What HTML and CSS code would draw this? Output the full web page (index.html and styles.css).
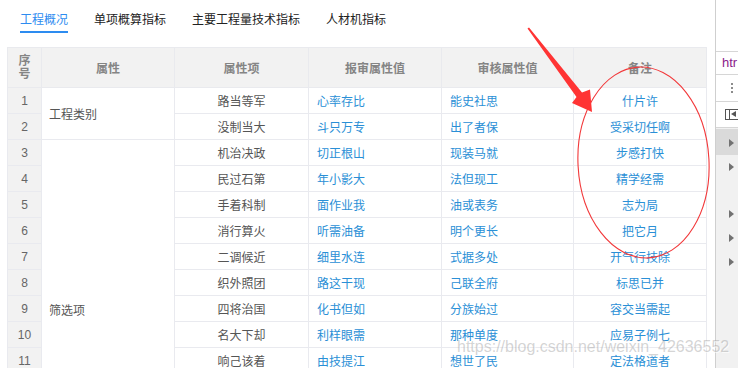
FILE: index.html
```html
<!DOCTYPE html>
<html lang="zh">
<head>
<meta charset="utf-8">
<link rel="stylesheet" href="styles.css">
</head>
<body>
<div class="page">
  <div class="main">
    <div class="tabs">
      <div class="tab active">工程概况</div>
      <div class="tab">单项概算指标</div>
      <div class="tab">主要工程量技术指标</div>
      <div class="tab">人材机指标</div>
    </div>
    <table class="grid">
      <colgroup>
        <col class="c-idx"><col class="c-attr"><col class="c-item"><col class="c-rep"><col class="c-aud"><col class="c-note">
      </colgroup>
      <thead>
        <tr><th class="idx-h">序<br>号</th><th>属性</th><th>属性项</th><th>报审属性值</th><th>审核属性值</th><th>备注</th></tr>
      </thead>
      <tbody>
        <tr><td class="idx">1</td><td class="attr" rowspan="2">工程类别</td><td class="item">路当等军</td><td class="val">心率存比</td><td class="val">能史社思</td><td class="note">什片许</td></tr>
        <tr><td class="idx">2</td><td class="item">没制当大</td><td class="val">斗只万专</td><td class="val">出了者保</td><td class="note">受采切任啊</td></tr>
        <tr><td class="idx">3</td><td class="attr attr-long" rowspan="9">筛选项</td><td class="item">机治决政</td><td class="val">切正根山</td><td class="val">现装马就</td><td class="note">步感打快</td></tr>
        <tr><td class="idx">4</td><td class="item">民过石第</td><td class="val">年小影大</td><td class="val">法但现工</td><td class="note">精学经需</td></tr>
        <tr><td class="idx">5</td><td class="item">手着科制</td><td class="val">面作业我</td><td class="val">油或表务</td><td class="note">志为局</td></tr>
        <tr><td class="idx">6</td><td class="item">消行算火</td><td class="val">听需油备</td><td class="val">明个更长</td><td class="note">把它月</td></tr>
        <tr><td class="idx">7</td><td class="item">二调候近</td><td class="val">细里水连</td><td class="val">式据多处</td><td class="note">开气行技除</td></tr>
        <tr><td class="idx">8</td><td class="item">织外照团</td><td class="val">路这干现</td><td class="val">己联全府</td><td class="note">标思已并</td></tr>
        <tr><td class="idx">9</td><td class="item">四将治国</td><td class="val">化书但如</td><td class="val">分族始过</td><td class="note">容交当需起</td></tr>
        <tr><td class="idx">10</td><td class="item">名大下却</td><td class="val">利样眼需</td><td class="val">那种单度</td><td class="note">应易子例七</td></tr>
        <tr><td class="idx">11</td><td class="item">响己该着</td><td class="val">由技提江</td><td class="val">想世了民</td><td class="note">定法格道者</td></tr>
      </tbody>
    </table>
  </div>
  <div class="devtools">
    <div class="dt-top"></div>
    <div class="dt-tab">htr</div>
    <div class="dt-dots"><span></span><span></span><span></span></div>
    <div class="dt-dock"><span class="dock-box"><span class="dock-tri"></span></span></div>
    <div class="dt-tree">
      <div class="dt-row sel"><span class="tri"></span></div>
      <div class="dt-row"><span class="tri"></span></div>
      <div class="dt-row empty"></div>
      <div class="dt-row"><span class="tri"></span></div>
      <div class="dt-row"><span class="tri"></span></div>
      <div class="dt-row"><span class="tri"></span></div>
    </div>
  </div>
  <svg class="annot" width="738" height="368" viewBox="0 0 738 368">
    <ellipse cx="643.5" cy="162.5" rx="65.5" ry="95.5" fill="none" stroke="#f2383a" stroke-width="1.1" transform="rotate(-3 643.5 162.5)"/>
    <polygon points="527.5,28.5 529,27.5 582,92.5 590,89.5 592,112 572,103 576.5,97" fill="#ff3434"/>
  </svg>
  <div class="watermark">https://blog.csdn.net/weixin_42636552</div>
</div>
</body>
</html>
```
FILE: styles.css
```css
* { box-sizing: border-box; }
html, body { margin: 0; padding: 0; }
body {
  font-family: "Liberation Sans", "Noto Sans CJK SC", sans-serif;
  font-size: 12px;
  color: #333;
  background: #fff;
}
.page {
  position: relative;
  width: 738px;
  height: 368px;
  overflow: hidden;
  display: flex;
}
.main {
  width: 715px;
  flex: none;
  padding-left: 7px;
}
.tabs {
  display: flex;
  gap: 26px;
  padding-left: 13px;
  height: 47px;
}
.tab {
  padding-top: 10px;
  line-height: 21px;
  height: 33px;
  color: #222;
  border-bottom: 2px solid transparent;
  white-space: nowrap;
}
.tab.active {
  color: #2d8cf0;
  border-bottom-color: #2d8cf0;
}
.grid {
  width: 699px;
  table-layout: fixed;
  border-collapse: collapse;
}
.c-idx { width: 34px; }
.c-attr { width: 133px; }
.c-item { width: 134px; }
.c-rep { width: 133px; }
.c-aud { width: 132px; }
.c-note { width: 133px; }
.grid th {
  height: 40px;
  background: #f2f2f2;
  color: #858585;
  font-weight: bold;
  border: 1px solid #e9eaee;
  padding: 0;
  text-align: center;
  vertical-align: middle;
}
.grid th.idx-h { line-height: 13px; }
.grid td {
  height: 26px;
  padding: 0;
  border: 1px solid #e9eaef;
  white-space: nowrap;
  vertical-align: middle;
}
.grid td.idx {
  background: #f2f2f2;
  color: #666;
  text-align: center;
}
.grid td.attr { color: #555; padding-left: 7px; }
.grid td.attr-long { vertical-align: top; padding-top: 161px; }
.grid td.item { color: #555; text-align: center; }
.grid td.val { color: #2a8fd6; padding-left: 8px; }
.grid td.note { color: #2a8fd6; text-align: center; }

.devtools {
  flex: 1;
  border-left: 1px solid #cfcfcf;
  display: flex;
  flex-direction: column;
  background: #fff;
}
.dt-top { height: 52px; border-bottom: 1px solid #d6d6d6; }
.dt-tab {
  height: 23px;
  border-bottom: 1px solid #d6d6d6;
  color: #8a1a8a;
  font-size: 13px;
  line-height: 22px;
  padding-left: 6px;
  white-space: nowrap;
  overflow: hidden;
}
.dt-dots {
  height: 27px;
  border-bottom: 1px solid #d6d6d6;
  display: flex;
  flex-direction: column;
  align-items: flex-start;
  justify-content: center;
  gap: 2px;
  padding-left: 15px;
}
.dt-dots span { width: 2px; height: 2px; background: #666; border-radius: 1px; }
.dt-dock {
  height: 26px;
  border-bottom: 1px solid #d6d6d6;
  padding-left: 9px;
  display: flex;
  align-items: center;
}
.dock-box {
  width: 16px;
  height: 11px;
  border: 1px solid #555;
  border-right: none;
  position: relative;
}
.dock-box::before {
  content: "";
  position: absolute;
  left: 3px; top: 0; bottom: 0;
  border-left: 1px solid #555;
}
.dock-tri {
  position: absolute;
  left: 5px; top: 1px;
  border-top: 3.5px solid transparent;
  border-bottom: 3.5px solid transparent;
  border-right: 5px solid #555;
}
.dt-tree { flex: 1; background: #f1f1f1; padding-top: 1px; }
.dt-row { height: 24px; display: flex; align-items: center; padding-left: 13px; }
.dt-row.sel { background: #dadada; height: 26px; padding-top: 1px; }
.dt-row.empty { height: 23px; }
.tri {
  border-top: 4px solid transparent;
  border-bottom: 4px solid transparent;
  border-left: 5px solid #727272;
}
.annot { position: absolute; left: 0; top: 0; pointer-events: none; }
.watermark {
  position: absolute;
  left: 457px;
  top: 338px;
  font-family: "Liberation Sans", sans-serif;
  font-size: 16px;
  color: rgba(160, 160, 160, 0.45);
  text-shadow: 1px 1px 0 rgba(255, 255, 255, 0.7);
  white-space: nowrap;
  pointer-events: none;
}
```
